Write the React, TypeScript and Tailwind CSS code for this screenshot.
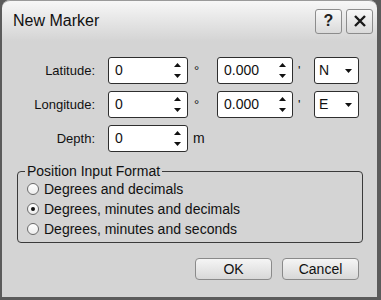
import React from 'react'

function Arrows() {
  return (
    <div className="flex flex-col justify-between h-[15px] w-[7px] mr-[6px]">
      <svg width="7" height="4" viewBox="0 0 7 4">
        <path d="M3.5 0 L7 4 L0 4 Z" fill="#111" />
      </svg>
      <svg width="7" height="4" viewBox="0 0 7 4">
        <path d="M0 0 L7 0 L3.5 4 Z" fill="#111" />
      </svg>
    </div>
  )
}

function Spin({ value, width }: { value: string; width: string }) {
  return (
    <div className={`${width} h-[27px] flex items-center bg-white border border-[#2e2e2e] rounded-[3px] pl-[6px]`}>
      <span className="flex-1 text-[14px] text-[#111]">{value}</span>
      <Arrows />
    </div>
  )
}

function Select({ value }: { value: string }) {
  return (
    <div className="w-[45px] h-[27px] flex items-center bg-white border border-[#2e2e2e] rounded-[3px] pl-[4px]">
      <span className="flex-1 text-[14px] text-[#111]">{value}</span>
      <svg width="7" height="4" viewBox="0 0 7 4" className="mr-[6px]">
        <path d="M0 0 L7 0 L3.5 4 Z" fill="#111" />
      </svg>
    </div>
  )
}

function Radio({ label, checked }: { label: string; checked?: boolean }) {
  return (
    <div className="h-[20px] flex items-center">
      <div className="ml-[2px] w-[12px] h-[12px] rounded-full border border-[#6a6a6a] bg-linear-to-b from-[#ffffff] to-[#ececec] flex items-center justify-center">
        {checked && <div className="w-[4px] h-[4px] rounded-full bg-[#111]" />}
      </div>
      <span className="ml-[5px] text-[14px] text-[#111]">{label}</span>
    </div>
  )
}

export default function App() {
  return (
    <div className="w-[381px] h-[300px] bg-[#5b5b5b] pl-[2px] pr-[4px] pb-[3px] font-['Liberation_Sans',Arial,sans-serif]">
      <div className="h-full rounded-t-[8px] bg-[#d4d4d4] flex flex-col overflow-hidden">
        {/* Title bar */}
        <div className="h-[41px] shrink-0 border-t border-[#9a9a9a] rounded-t-[8px] bg-linear-to-b from-[#f7f7f7] to-[#d4d4d4] flex items-center pl-[11px] pr-[4px]">
          <span className="text-[16px] text-[#111]">New Marker</span>
          <div className="ml-auto flex gap-[4px]">
            <div className="w-[27px] h-[25px] border border-[#8c8c8c] rounded-[3px] bg-linear-to-b from-[#f8f8f8] to-[#dadada] flex items-center justify-center text-[16px] font-bold text-[#222]">
              ?
            </div>
            <div className="w-[27px] h-[25px] border border-[#8c8c8c] rounded-[3px] bg-linear-to-b from-[#f8f8f8] to-[#dadada] flex items-center justify-center">
              <svg width="12" height="12" viewBox="0 0 12 12">
                <path d="M1 1 L11 11 M11 1 L1 11" stroke="#1a1a1a" strokeWidth="2.4" />
              </svg>
            </div>
          </div>
        </div>

        {/* Fields */}
        <div className="pt-[16px] flex flex-col gap-[7px] text-[13px] text-[#111]">
          <div className="flex items-center h-[27px]">
            <span className="w-[93px] text-right">Latitude:</span>
            <div className="ml-[13px]">
              <Spin value="0" width="w-[80px]" />
            </div>
            <span className="w-[29px] pl-[6px] self-start pt-[4px]">°</span>
            <Spin value="0.000" width="w-[76px]" />
            <span className="w-[21px] pl-[5px] self-start pt-[4px]">'</span>
            <Select value="N" />
          </div>
          <div className="flex items-center h-[27px]">
            <span className="w-[93px] text-right">Longitude:</span>
            <div className="ml-[13px]">
              <Spin value="0" width="w-[80px]" />
            </div>
            <span className="w-[29px] pl-[6px] self-start pt-[4px]">°</span>
            <Spin value="0.000" width="w-[76px]" />
            <span className="w-[21px] pl-[5px] self-start pt-[4px]">'</span>
            <Select value="E" />
          </div>
          <div className="flex items-center h-[27px]">
            <span className="w-[93px] text-right">Depth:</span>
            <div className="ml-[13px]">
              <Spin value="0" width="w-[80px]" />
            </div>
            <span className="pl-[5px] text-[14px]">m</span>
          </div>
        </div>

        {/* Position format group */}
        <fieldset className="mt-[12px] ml-[15px] w-[346px] border border-[#3a3a3a] rounded-[4px] pl-[7px] pb-[3px]">
          <legend className="px-[2px] text-[14px] leading-[15px] text-[#111]">Position Input Format</legend>
          <Radio label="Degrees and decimals" />
          <Radio label="Degrees, minutes and decimals" checked />
          <Radio label="Degrees, minutes and seconds" />
        </fieldset>

        {/* Buttons */}
        <div className="mt-[15px] flex justify-end gap-[10px] pr-[18px]">
          <button className="w-[77px] h-[22px] border border-[#8a8a8a] rounded-[4px] bg-linear-to-b from-[#f5f5f5] to-[#d8d8d8] text-[14px] text-[#111]">
            OK
          </button>
          <button className="w-[77px] h-[22px] border border-[#8a8a8a] rounded-[4px] bg-linear-to-b from-[#f5f5f5] to-[#d8d8d8] text-[14px] text-[#111]">
            Cancel
          </button>
        </div>
      </div>
    </div>
  )
}
